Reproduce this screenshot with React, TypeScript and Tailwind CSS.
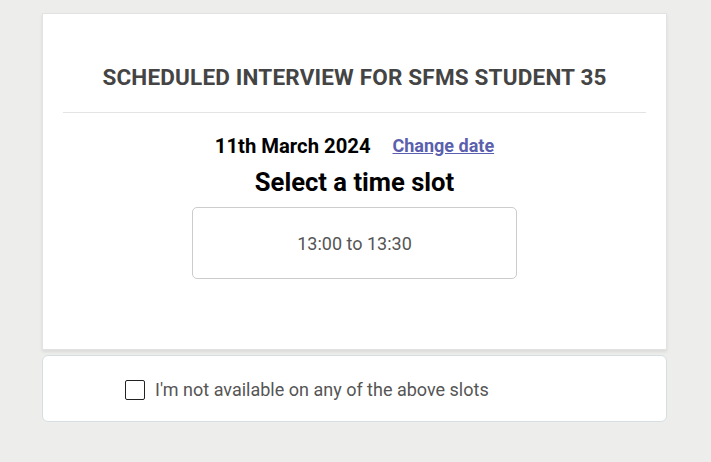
import React from "react";

export default function App() {
  return (
    <div className="min-h-screen w-full bg-[#ededeb] pt-[13px] font-['Roboto',sans-serif]">
      <div className="ml-[42px] w-[625px]">
        <div className="h-[337px] bg-white border border-[#e2e2e2] shadow-[0_2px_3px_rgba(0,0,0,0.08)] px-[20px]">
          <div className="pt-[50px] pb-[21px] border-b border-[#e3e3e3] text-center">
            <h1 className="text-[22.5px] leading-[27px] font-bold text-[#444444] tracking-[0.18px]">
              SCHEDULED INTERVIEW FOR SFMS STUDENT 35
            </h1>
          </div>
          <div className="flex items-center justify-center gap-[22px] mt-[20px]">
            <span className="text-[20.25px] leading-[26px] font-bold text-black">11th March 2024</span>
            <a className="text-[18px] leading-[26px] font-bold text-[#5b5fad] underline">Change date</a>
          </div>
          <h2 className="text-center text-[25.6px] leading-[30px] font-bold text-black mt-[8px]">Select a time slot</h2>
          <div className="flex justify-center mt-[10px]">
            <div className="w-[325px] h-[72px] rounded-[5px] border border-[#cccccc] flex items-center justify-center text-[18px] text-[#555555]">
              13:00 to 13:30
            </div>
          </div>
        </div>
        <div className="mt-[5px] h-[67px] bg-white border border-[#d5dfe2] rounded-[6px] flex items-center pl-[82px]">
          <span className="w-[20px] h-[20px] border-[1.5px] border-[#222] rounded-[2px] bg-white mt-[3px]"></span>
          <span className="ml-[10px] text-[18px] text-[#555555] mt-[1px]">I'm not available on any of the above slots</span>
        </div>
      </div>
    </div>
  );
}
